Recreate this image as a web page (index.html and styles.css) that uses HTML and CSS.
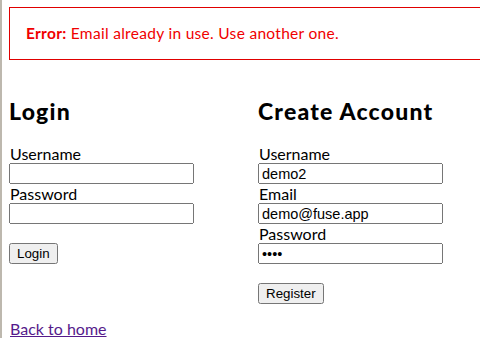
FILE: index.html
```html
<!DOCTYPE html>
<html>
<head>
    <title>Fuse - Account</title>
    <link rel="stylesheet" href="styles.css">
</head>
<body>
    <div class="error"><strong>Error:</strong> Email already in use. Use another one.</div>

    <div class="columns">
        <form class="col">
            <h2>Login</h2>
            <label for="loginUser">Username</label>
            <input type="text" id="loginUser">
            <label for="loginPass">Password</label>
            <input type="password" id="loginPass">
            <button type="button">Login</button>
        </form>

        <form class="col">
            <h2>Create Account</h2>
            <label for="regUser">Username</label>
            <input type="text" id="regUser" value="demo2">
            <label for="regEmail">Email</label>
            <input type="text" id="regEmail" value="demo@fuse.app">
            <label for="regPass">Password</label>
            <input type="password" id="regPass" value="demo">
            <button type="button">Register</button>
        </form>
    </div>

    <p class="back"><a href="#">Back to home</a></p>
</body>
</html>
```

FILE: styles.css
```css
html { overflow: hidden; border-left: 2px solid #bdb8ae; background: #fff; }
body { font-family: Lato, "Open Sans", sans-serif; margin: 7px 0 0 7px; width: 640px; color: #000; }
.error { border: 1px solid #e00000; color: #f00000; padding: 15px 16px 16px; font-size: 15.5px; letter-spacing: 0.3px; line-height: 20px; }
.error strong { font-weight: 700; }
.columns { display: grid; grid-template-columns: 249px 200px; }
.col { display: flex; flex-direction: column; align-items: flex-start; margin: 0; }
.col h2 { font-size: 23px; line-height: 28px; letter-spacing: 1.2px; margin: 37px 0 19px 0; font-weight: 900; }
.col label { font-size: 16px; line-height: 19px; margin-left: 1px; }
.col input { font-family: "Liberation Sans", Arial, sans-serif; font-size: 14.5px; width: 185px; height: 21px; box-sizing: border-box; margin: 0; }
.col button { font-family: "Liberation Sans", Arial, sans-serif; font-size: 13.33px; margin: 19px 0 0; height: 21px; padding: 1px 6px; }
.back { margin: 15px 0 0 1px; font-size: 16px; line-height: 19px; }
.back a { color: #551a8b; }
```
